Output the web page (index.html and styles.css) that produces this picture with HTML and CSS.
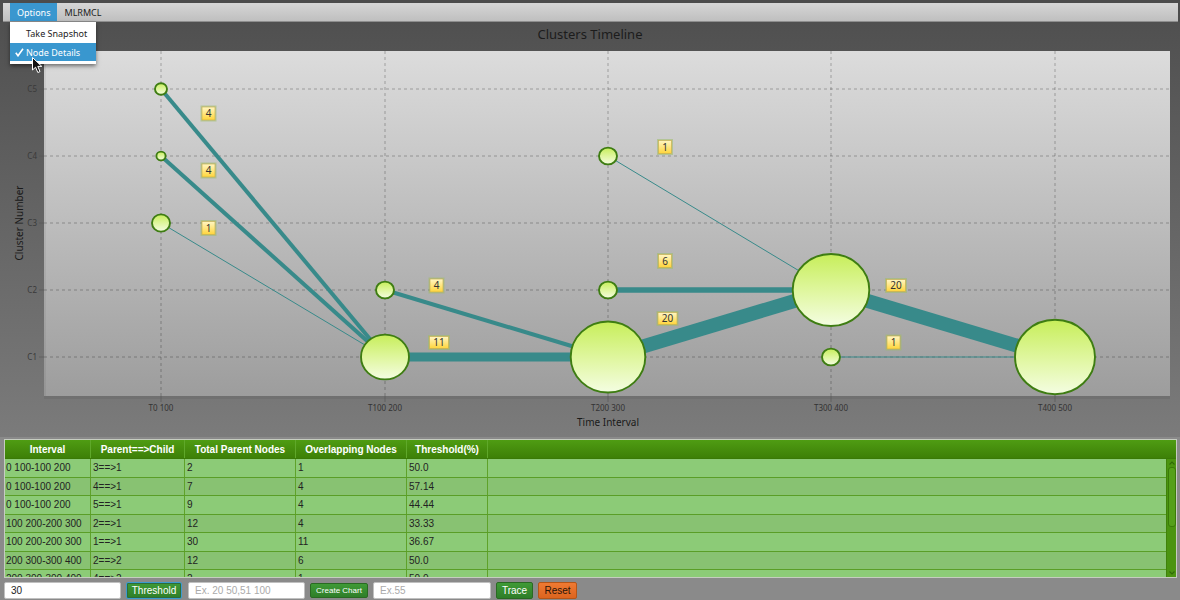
FILE: index.html
```html
<!DOCTYPE html>
<html>
<head>
<meta charset="utf-8">
<title>Clusters Timeline</title>
<link rel="stylesheet" href="styles.css">
</head>
<body>
<div class="app">
  <div class="menubar-frame">
    <div class="menubar">
      <span class="menu active">Options</span>
      <span class="menu">MLRMCL</span>
    </div>
  </div>

  <div class="chart">
    <div class="chart-title">Clusters Timeline</div>
    <svg class="plot" width="1180" height="386" viewBox="0 0 1180 386">
      <defs>
        <linearGradient id="plotbg" x1="0" y1="0" x2="0" y2="1">
          <stop offset="0" stop-color="#dcdcdc"/>
          <stop offset="1" stop-color="#9d9d9d"/>
        </linearGradient>
        <linearGradient id="bub" x1="0" y1="0" x2="0" y2="1">
          <stop offset="0" stop-color="#c7ee5a"/>
          <stop offset="0.55" stop-color="#e1f7a4"/>
          <stop offset="1" stop-color="#f4fde2"/>
        </linearGradient>
        <linearGradient id="lbl" x1="0" y1="0" x2="0" y2="1">
          <stop offset="0" stop-color="#fff6c4"/>
          <stop offset="1" stop-color="#ffd53a"/>
        </linearGradient>
      </defs>

      <!-- plot background -->
      <rect x="44" y="0" width="1126" height="345" fill="url(#plotbg)"/>
      <rect x="44" y="0" width="2" height="345" fill="#000" opacity="0.05"/>
      <rect x="44" y="345" width="1126" height="3" fill="#000" opacity="0.06"/>

      <!-- grid -->
      <g class="grid">
        <line x1="44" y1="38" x2="1170" y2="38"/>
        <line x1="44" y1="105" x2="1170" y2="105"/>
        <line x1="44" y1="172" x2="1170" y2="172"/>
        <line x1="44" y1="239" x2="1170" y2="239"/>
        <line x1="44" y1="306" x2="1170" y2="306"/>
        <line x1="161" y1="0" x2="161" y2="345"/>
        <line x1="385" y1="0" x2="385" y2="345"/>
        <line x1="608" y1="0" x2="608" y2="345"/>
        <line x1="831" y1="0" x2="831" y2="345"/>
        <line x1="1055" y1="0" x2="1055" y2="345"/>
      </g>
      <g class="ticks">
        <line x1="39" y1="38" x2="44" y2="38"/>
        <line x1="39" y1="105" x2="44" y2="105"/>
        <line x1="39" y1="172" x2="44" y2="172"/>
        <line x1="39" y1="239" x2="44" y2="239"/>
        <line x1="39" y1="306" x2="44" y2="306"/>
        <line x1="161" y1="345" x2="161" y2="351"/>
        <line x1="385" y1="345" x2="385" y2="351"/>
        <line x1="608" y1="345" x2="608" y2="351"/>
        <line x1="831" y1="345" x2="831" y2="351"/>
        <line x1="1055" y1="345" x2="1055" y2="351"/>
      </g>

      <!-- axis labels -->
      <g class="ytick">
        <text x="37" y="41">C5</text>
        <text x="37" y="108">C4</text>
        <text x="37" y="175">C3</text>
        <text x="37" y="242">C2</text>
        <text x="37" y="309">C1</text>
      </g>
      <g class="xtick">
        <text x="161" y="360">T0 100</text>
        <text x="385" y="360">T100 200</text>
        <text x="608" y="360">T200 300</text>
        <text x="831" y="360">T300 400</text>
        <text x="1055" y="360">T400 500</text>
      </g>
      <text class="axis-title" x="608" y="375">Time Interval</text>
      <text class="axis-title" x="0" y="0" transform="translate(23 172) rotate(-90)">Cluster Number</text>

      <!-- edges -->
      <g class="edges">
        <line x1="161" y1="38" x2="385" y2="306" stroke-width="4"/>
        <line x1="161" y1="105" x2="385" y2="306" stroke-width="4"/>
        <line x1="161" y1="172" x2="385" y2="306" stroke-width="1"/>
        <line x1="385" y1="239" x2="608" y2="306" stroke-width="4"/>
        <line x1="385" y1="306" x2="608" y2="306" stroke-width="9"/>
        <line x1="608" y1="105" x2="831" y2="239" stroke-width="1"/>
        <line x1="608" y1="239" x2="831" y2="239" stroke-width="5.5"/>
        <line x1="608" y1="306" x2="831" y2="239" stroke-width="14"/>
        <line x1="831" y1="239" x2="1055" y2="306" stroke-width="14"/>
        <line x1="831" y1="306" x2="1055" y2="306" stroke-width="1"/>
      </g>

      <!-- bubbles -->
      <g class="nodes">
        <ellipse cx="161" cy="38" rx="6" ry="5.8"/>
        <ellipse cx="161" cy="105" rx="4.6" ry="4.4"/>
        <ellipse cx="161" cy="172" rx="9" ry="8.6"/>
        <ellipse cx="385" cy="239" rx="9" ry="8.4"/>
        <ellipse cx="385" cy="306" rx="24" ry="22.4"/>
        <ellipse cx="608" cy="105" rx="9" ry="8.4"/>
        <ellipse cx="608" cy="239" rx="9" ry="8.4"/>
        <ellipse cx="608" cy="306" rx="37.3" ry="35.5"/>
        <ellipse cx="831" cy="239" rx="38.3" ry="36"/>
        <ellipse cx="831" cy="306" rx="9" ry="8.4"/>
        <ellipse cx="1055" cy="306" rx="40" ry="37.2"/>
      </g>

      <!-- edge labels -->
      <g class="labels">
        <g transform="translate(208.5 62.5)"><rect class="glow" x="-6.5" y="-6.5" width="13" height="13"/><rect class="box" x="-6.5" y="-6.5" width="13" height="13"/><text y="3.5">4</text></g>
        <g transform="translate(208.5 119.5)"><rect class="glow" x="-6.5" y="-6.5" width="13" height="13"/><rect class="box" x="-6.5" y="-6.5" width="13" height="13"/><text y="3.5">4</text></g>
        <g transform="translate(208.5 177)"><rect class="glow" x="-6.5" y="-6.5" width="13" height="13"/><rect class="box" x="-6.5" y="-6.5" width="13" height="13"/><text y="3.5">1</text></g>
        <g transform="translate(436.5 234.5)"><rect class="glow" x="-6.5" y="-6.5" width="13" height="13"/><rect class="box" x="-6.5" y="-6.5" width="13" height="13"/><text y="3.5">4</text></g>
        <g transform="translate(439 291.5)"><rect class="glow" x="-9.5" y="-6" width="19" height="12"/><rect class="box" x="-9.5" y="-6" width="19" height="12"/><text y="3.5">11</text></g>
        <g transform="translate(665 96)"><rect class="glow" x="-6.5" y="-6.5" width="13" height="13"/><rect class="box" x="-6.5" y="-6.5" width="13" height="13"/><text y="3.5">1</text></g>
        <g transform="translate(665 210)"><rect class="glow" x="-6.5" y="-6.5" width="13" height="13"/><rect class="box" x="-6.5" y="-6.5" width="13" height="13"/><text y="3.5">6</text></g>
        <g transform="translate(667.5 267.5)"><rect class="glow" x="-9.5" y="-6" width="19" height="12"/><rect class="box" x="-9.5" y="-6" width="19" height="12"/><text y="3.5">20</text></g>
        <g transform="translate(896 234.5)"><rect class="glow" x="-9.5" y="-6" width="19" height="12"/><rect class="box" x="-9.5" y="-6" width="19" height="12"/><text y="3.5">20</text></g>
        <g transform="translate(893.5 291.5)"><rect class="glow" x="-6.5" y="-6.5" width="13" height="13"/><rect class="box" x="-6.5" y="-6.5" width="13" height="13"/><text y="3.5">1</text></g>
      </g>
    </svg>
  </div>

  <div class="table">
    <div class="thead">
      <div class="th">Interval</div>
      <div class="th">Parent==&gt;Child</div>
      <div class="th">Total Parent Nodes</div>
      <div class="th">Overlapping Nodes</div>
      <div class="th">Threshold(%)</div>
      <div class="th"></div>
    </div>
    <div class="tbody">
      <div class="rows">
        <div class="tr"><div class="td">0 100-100 200</div><div class="td">3==&gt;1</div><div class="td">2</div><div class="td">1</div><div class="td">50.0</div><div class="td"></div></div>
        <div class="tr"><div class="td">0 100-100 200</div><div class="td">4==&gt;1</div><div class="td">7</div><div class="td">4</div><div class="td">57.14</div><div class="td"></div></div>
        <div class="tr"><div class="td">0 100-100 200</div><div class="td">5==&gt;1</div><div class="td">9</div><div class="td">4</div><div class="td">44.44</div><div class="td"></div></div>
        <div class="tr"><div class="td">100 200-200 300</div><div class="td">2==&gt;1</div><div class="td">12</div><div class="td">4</div><div class="td">33.33</div><div class="td"></div></div>
        <div class="tr"><div class="td">100 200-200 300</div><div class="td">1==&gt;1</div><div class="td">30</div><div class="td">11</div><div class="td">36.67</div><div class="td"></div></div>
        <div class="tr"><div class="td">200 300-300 400</div><div class="td">2==&gt;2</div><div class="td">12</div><div class="td">6</div><div class="td">50.0</div><div class="td"></div></div>
        <div class="tr"><div class="td">200 300-300 400</div><div class="td">4==&gt;2</div><div class="td">2</div><div class="td">1</div><div class="td">50.0</div><div class="td"></div></div>
        <div class="tr"><div class="td">300 400-400 500</div><div class="td">1==&gt;1</div><div class="td">20</div><div class="td">1</div><div class="td">5.0</div><div class="td"></div></div>
      </div>
      <div class="vscroll">
        <svg class="arrow" width="10" height="8" viewBox="0 0 10 8"><polyline points="2.5,5.5 5,3 7.5,5.5" /></svg>
        <div class="thumb"></div>
        <div class="track-fill"></div>
        <svg class="arrow" width="10" height="8" viewBox="0 0 10 8"><polyline points="2.5,2.5 5,5 7.5,2.5" /></svg>
      </div>
    </div>
  </div>

  <div class="controls">
    <input class="field" type="text" value="30">
    <button class="btn btn-green btn-focus">Threshold</button>
    <input class="field" type="text" placeholder="Ex. 20 50,51 100">
    <button class="btn btn-green btn-small">Create Chart</button>
    <input class="field field-wide" type="text" placeholder="Ex.55">
    <button class="btn btn-green btn-trace">Trace</button>
    <button class="btn btn-orange">Reset</button>
  </div>

  <div class="dropdown">
    <div class="dd-item">Take Snapshot</div>
    <div class="dd-item selected">
      <svg class="check" width="9" height="9" viewBox="0 0 9 9"><polyline points="0.8,4.8 3,7.8 8,0.8"/></svg>
      Node Details
    </div>
  </div>

  <svg class="cursor" width="12" height="18" viewBox="0 0 12 18">
    <path d="M0.5 0.5 L0.5 13 L3.6 10.2 L5.8 15.5 L8 14.6 L5.8 9.4 L9.8 9.4 Z"/>
  </svg>
</div>
</body>
</html>
```

FILE: styles.css
```css
* { box-sizing: border-box; }

html, body {
  margin: 0;
  padding: 0;
}

body {
  width: 1180px;
  height: 600px;
  overflow: hidden;
  background: #8a8a8a;
  font-family: "Noto Sans", "DejaVu Sans", sans-serif;
}

.app {
  position: relative;
  width: 1180px;
  height: 600px;
  display: flex;
  flex-direction: column;
}

/* ---------- menu bar ---------- */
.menubar-frame {
  height: 22px;
  padding: 3px 2px 0 3px;
  background: #4c4c4c;
}

.menubar {
  height: 19px;
  display: flex;
  align-items: stretch;
  padding-left: 7px;
  background: linear-gradient(#d6d6d6, #bfbfbf);
  border-bottom: 1px solid #8e8e8e;
}

.menu {
  display: flex;
  align-items: center;
  padding: 0 7px;
  font-size: 9px;
  color: #222;
}

.menu.active {
  background: #3a97cf;
  color: #fff;
}

/* ---------- chart ---------- */
.chart {
  height: 415px;
  background: linear-gradient(#505050, #7b7b7b);
}

.chart-title {
  height: 29px;
  line-height: 25px;
  text-align: center;
  font-size: 13px;
  color: #1c1c1c;
}

.plot {
  display: block;
}

.grid line {
  stroke: #000;
  stroke-opacity: 0.27;
  stroke-width: 1;
  stroke-dasharray: 3 3;
}

.ticks line {
  stroke: #555;
  stroke-opacity: 0.6;
  stroke-width: 1;
}

.ytick text {
  font-family: "Noto Sans", "DejaVu Sans", sans-serif;
  font-size: 8px;
  fill: #3a3a3a;
  text-anchor: end;
}

.xtick text {
  font-family: "Noto Sans", "DejaVu Sans", sans-serif;
  font-size: 8px;
  fill: #333;
  text-anchor: middle;
}

.axis-title {
  font-family: "Noto Sans", "DejaVu Sans", sans-serif;
  font-size: 10px;
  fill: #1a1a1a;
  text-anchor: middle;
}

.edges line {
  stroke: #388a8a;
}

.nodes ellipse {
  fill: url(#bub);
  stroke: #3e7d12;
  stroke-width: 1.9;
}

.labels .glow {
  fill: none;
  stroke: #9fbd6a;
  stroke-width: 3;
  stroke-opacity: 0.55;
}

.labels .box {
  fill: url(#lbl);
  stroke: #c9b150;
  stroke-width: 0.7;
}

.labels text {
  font-family: "Noto Sans", "DejaVu Sans", sans-serif;
  font-size: 10px;
  fill: #333;
  text-anchor: middle;
}

/* ---------- table ---------- */
.table {
  margin: 2px 3px 0 4px;
  height: 139px;
  border: 1px solid #c6ccc0;
  display: flex;
  flex-direction: column;
  font-family: "Liberation Sans", Arial, sans-serif;
  font-size: 10px;
}

.thead {
  height: 19px;
  flex: none;
  display: grid;
  grid-template-columns: 86px 94px 111px 111px 81px 1fr;
  background: linear-gradient(#4f9c13, #3d8007);
  border-bottom: 1px solid #3a7a06;
}

.th {
  display: flex;
  align-items: center;
  justify-content: center;
  color: #fff;
  font-weight: bold;
  border-right: 1px solid #5fa82a;
}

.th:last-child {
  border-right: none;
}

.tbody {
  flex: 1;
  display: flex;
  overflow: hidden;
}

.rows {
  flex: 1;
  overflow: hidden;
}

.tr {
  height: 18.5px;
  display: grid;
  grid-template-columns: 86px 94px 111px 111px 81px 1fr;
  border-bottom: 1px solid #5a9e27;
  background: #8ccb77;
}

.tr:nth-child(even) {
  background: #88c272;
}

.td {
  display: flex;
  align-items: center;
  padding-left: 2px;
  color: #222;
  border-right: 1px solid #5fa22a;
  white-space: nowrap;
  overflow: hidden;
}

.td:first-child {
  padding-left: 1px;
}

.td:last-child {
  border-right: none;
}

.vscroll {
  width: 10px;
  flex: none;
  display: flex;
  flex-direction: column;
  align-items: center;
  background: #4b9410;
  border-left: 1px solid #3f8209;
}

.vscroll .arrow {
  display: block;
  flex: none;
}

.vscroll .arrow polyline {
  fill: none;
  stroke: #2f6a06;
  stroke-width: 1.1;
}

.thumb {
  width: 8px;
  height: 60px;
  flex: none;
  border: 1px solid #3a7a08;
  border-radius: 3px;
  background: #55a01a;
}

.track-fill {
  flex: 1;
}

/* ---------- controls ---------- */
.controls {
  height: 22px;
  flex: none;
  display: flex;
  align-items: flex-start;
  gap: 5px;
  padding: 4px 4px 0 4px;
  font-family: "Liberation Sans", Arial, sans-serif;
}

.field {
  width: 117px;
  height: 17px;
  margin: 0;
  padding: 0 6px;
  border: 1px solid #c0c0c0;
  border-radius: 2px;
  background: #fff;
  font-family: "Liberation Sans", Arial, sans-serif;
  font-size: 10px;
  color: #222;
  outline: none;
}

.field::placeholder {
  color: #aaa;
}

.field-wide {
  width: 118px;
}

.btn {
  height: 17px;
  margin: 0;
  padding: 0;
  border-radius: 2px;
  font-family: "Liberation Sans", Arial, sans-serif;
  font-size: 10px;
  line-height: 15px;
}

.btn-green {
  background: linear-gradient(#3f9a36, #2e7e29);
  border: 1px solid #296a22;
  color: #fff;
}

.btn-focus {
  width: 56px;
  margin-right: 1px;
  border: 1px solid #3b9bd0;
  box-shadow: inset 0 0 0 1px #2d6c3a;
}

.btn-small {
  width: 58px;
  height: 15px;
  margin-top: 1px;
  font-size: 8px;
  line-height: 12px;
}

.btn-trace {
  width: 37px;
}

.btn-orange {
  width: 39px;
  background: linear-gradient(#ef7a33, #dc641f);
  border: 1px solid #b65516;
  color: #2a1408;
}

/* ---------- dropdown menu (overlay) ---------- */
.dropdown {
  position: absolute;
  left: 10px;
  top: 22px;
  width: 86px;
  height: 42px;
  background: #fff;
  padding-top: 2px;
  box-shadow: 0 2px 4px rgba(0, 0, 0, 0.5);
  font-family: "Noto Sans", "DejaVu Sans", sans-serif;
  font-size: 9px;
}

.dd-item {
  height: 19px;
  display: flex;
  align-items: center;
  padding-left: 16px;
  color: #222;
  position: relative;
}

.dd-item.selected {
  height: 18px;
  background: #3997cf;
  color: #fff;
}

.check {
  position: absolute;
  left: 5px;
  top: 5px;
}

.check polyline {
  fill: none;
  stroke: #fff;
  stroke-width: 1.6;
}

.cursor {
  position: absolute;
  left: 32px;
  top: 57px;
}

.cursor path {
  fill: #111;
  stroke: #fff;
  stroke-width: 1;
  stroke-linejoin: round;
}
```
